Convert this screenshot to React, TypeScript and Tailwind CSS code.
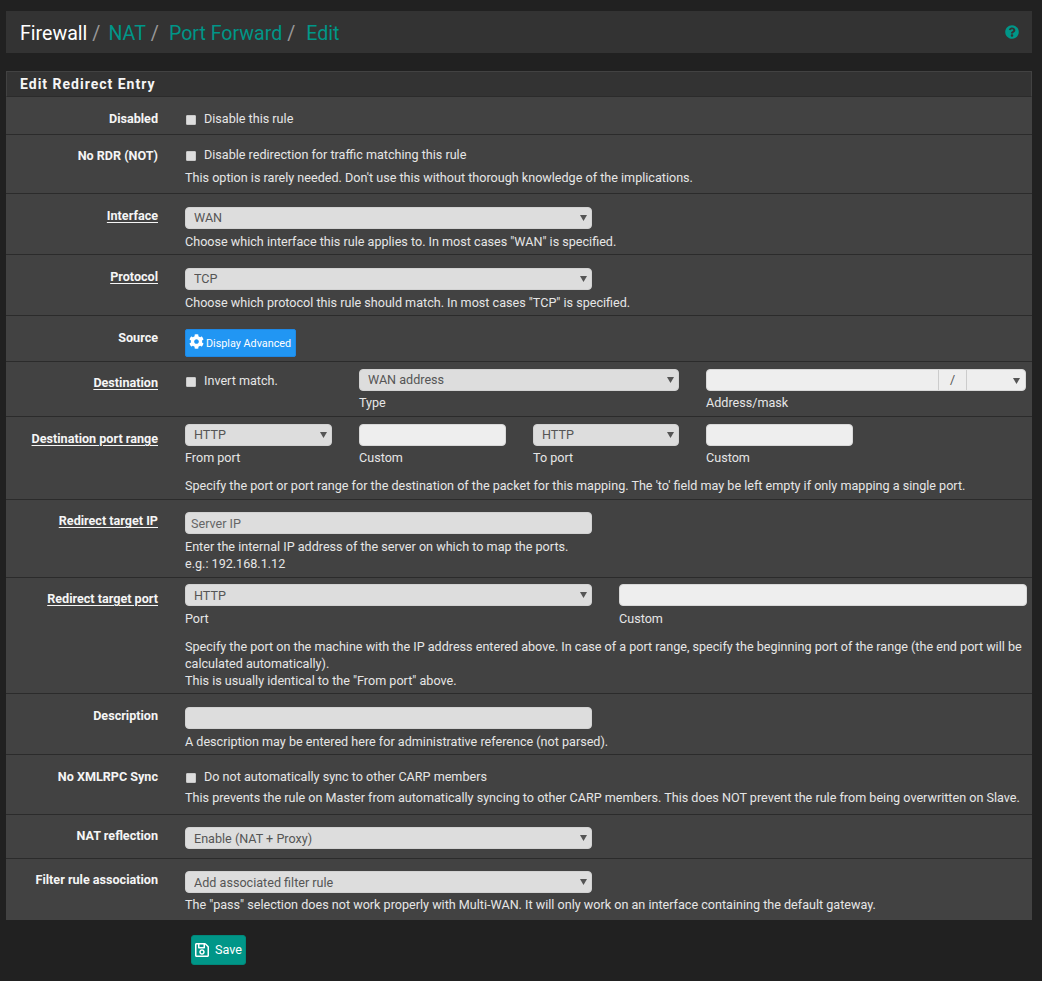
import { type ReactNode } from 'react'
import { FaCog, FaQuestionCircle, FaRegSave } from 'react-icons/fa'

function Row({ label, req, className, children }: { label: string; req?: boolean; className: string; children: ReactNode }) {
  return (
    <div className={`flex border-b border-[#2b2b2b] last:border-b-0 ${className}`}>
      <div className="w-[152px] shrink-0 text-right font-bold text-[12.6px] leading-[19px] text-[#f5f5f5]">
        <span className={req ? 'underline underline-offset-2' : ''}>{label}</span>
      </div>
      <div className="ml-[27px] w-[842px] shrink-0">{children}</div>
    </div>
  )
}

function Check({ label, className = '' }: { label: string; className?: string }) {
  return (
    <label className={`flex items-center h-[17px] ${className}`}>
      <input type="checkbox" className="appearance-none w-[10px] h-[10px] ml-[1px] rounded-[1px] bg-[#ddd] border border-[#c8c8c8]" />
      <span className="ml-[8px]">{label}</span>
    </label>
  )
}

function Select({ value, className = '', empty, low }: { value?: string; className?: string; empty?: boolean; low?: boolean }) {
  return (
    <div className={`relative ${className}`}>
      <select
        defaultValue={value}
        className={`appearance-none block w-full h-[22px] rounded-[4px] text-[12.6px] text-[#555] pl-[8px] ${low ? 'pt-[2px]' : ''} ${empty ? 'bg-transparent' : 'border border-[#d2d2d2] bg-[#ddd]'}`}
      >
        {value && <option>{value}</option>}
      </select>
      <svg viewBox="0 0 7 6" className="absolute right-[5px] top-[8px] w-[7px] h-[6px] pointer-events-none">
        <path d="M0 0h7L3.5 6z" fill="#555" />
      </svg>
    </div>
  )
}

function Field({ className = '' }: { className?: string }) {
  return <input type="text" className={`block h-[22px] rounded-[4px] border border-[#d8d8d8] bg-[#eee] ${className}`} />
}

function Help({ children, className = '' }: { children: ReactNode; className?: string }) {
  return <p className={`text-[#e6e6e6] leading-[17px] ${className}`}>{children}</p>
}

export default function App() {
  return (
    <div className="min-h-[981px] bg-[#212121] pt-[11px] px-[6px] text-[12.6px] text-[#e6e6e6]" style={{ fontFamily: 'Roboto, sans-serif' }}>
      <div className="w-[1026px] h-[42px] bg-[#333] flex items-center pt-[4px] pl-[14px] pr-[13px] text-[19.6px] text-[#009688]">
        <span className="text-white">Firewall</span>
        <span className="text-[#999] ml-[5px] mr-[8px]">/</span>
        <span>NAT</span>
        <span className="text-[#999] ml-[5px] mr-[10px]">/</span>
        <span>Port Forward</span>
        <span className="text-[#999] ml-[5px] mr-[11px]">/</span>
        <span>Edit</span>
        <FaQuestionCircle className="ml-auto -mt-[4px] text-[14px] text-[#009688]" />
      </div>

      <div className="w-[1026px] mt-[18px] bg-[#424242]">
        <div className="h-[26px] bg-[#333] border border-[#424242] border-b-[#2b2b2b] pl-[13px] flex items-center text-[14px] font-bold tracking-[1px] text-[#f5f5f5]">
          Edit Redirect Entry
        </div>

        <Row label="Disabled" className="h-[38px] pt-[12px]">
          <Check label="Disable this rule" className="mt-[2px]" />
        </Row>

        <Row label="No RDR (NOT)" className="h-[59px] pt-[11px]">
          <Check label="Disable redirection for traffic matching this rule" className="mt-[1px]" />
          <Help className="mt-[5px]">This option is rarely needed. Don't use this without thorough knowledge of the implications.</Help>
        </Row>

        <Row label="Interface" req className="h-[61px] pt-[12px]">
          <Select value="WAN" className="w-[407px] mt-[1px]" />
          <Help className="mt-[4px]">Choose which interface this rule applies to. In most cases "WAN" is specified.</Help>
        </Row>

        <Row label="Protocol" req className="h-[61px] pt-[12px]">
          <Select value="TCP" className="w-[407px] mt-[1px]" />
          <Help className="mt-[4px]">Choose which protocol this rule should match. In most cases "TCP" is specified.</Help>
        </Row>

        <Row label="Source" className="h-[46px] pt-[12px]">
          <button className="flex items-center h-[28px] w-[111px] mt-[1px] pl-[3px] rounded-[2px] bg-[#2196f3] border border-[#1e88e5] text-[10.8px] text-white">
            <FaCog className="text-[15px] mr-[2px] -mt-[3px]" />
            <span className="pt-[2px]">Display Advanced</span>
          </button>
        </Row>

        <Row label="Destination" req className="h-[55px] pt-[11px]">
          <div className="grid grid-cols-[147px_320px_320px] gap-x-[27px] -mt-[4px]">
            <div className="pt-[4px]">
              <Check label="Invert match." />
            </div>
            <div>
              <Select value="WAN address" className="w-full" />
              <div className="mt-[3px] leading-[17px]">Type</div>
            </div>
            <div>
              <div className="flex h-[22px] rounded-[4px] border border-[#d8d8d8] bg-[#eee] overflow-hidden">
                <input type="text" className="flex-1 min-w-0 bg-transparent" />
                <div className="w-[29px] border-x border-[#ccc] text-[#555] flex items-center justify-center">/</div>
                <Select empty className="w-[58px]" />
              </div>
              <div className="mt-[3px] leading-[17px]">Address/mask</div>
            </div>
          </div>
        </Row>

        <Row label="Destination port range" req className="h-[83px] pt-[12px]">
          <div className="grid grid-cols-[147px_147px_146px_147px] gap-x-[27px] -mt-[5px]">
            <div>
              <Select value="HTTP" className="w-full" />
              <div className="mt-[3px] leading-[17px]">From port</div>
            </div>
            <div>
              <Field className="w-full" />
              <div className="mt-[3px] leading-[17px]">Custom</div>
            </div>
            <div>
              <Select value="HTTP" className="w-full" />
              <div className="mt-[3px] leading-[17px]">To port</div>
            </div>
            <div>
              <Field className="w-full" />
              <div className="mt-[3px] leading-[17px]">Custom</div>
            </div>
          </div>
          <Help className="mt-[11px]">Specify the port or port range for the destination of the packet for this mapping. The 'to' field may be left empty if only mapping a single port.</Help>
        </Row>

        <Row label="Redirect target IP" req className="h-[78px] pt-[11px]">
          <input
            type="text"
            placeholder="Server IP"
            className="block w-[407px] h-[22px] mt-[1px] rounded-[4px] border border-[#d2d2d2] bg-[#ddd] px-[5px] text-[12.6px] text-[#555] placeholder:text-[#666]"
          />
          <Help className="mt-[4px]">Enter the internal IP address of the server on which to map the ports.</Help>
          <Help>e.g.: 192.168.1.12</Help>
        </Row>

        <Row label="Redirect target port" req className="h-[116px] pt-[11px]">
          <div className="grid grid-cols-[407px_408px] gap-x-[27px] -mt-[5px]">
            <div>
              <Select value="HTTP" low className="w-full" />
              <div className="mt-[4px] leading-[17px]">Port</div>
            </div>
            <div>
              <Field className="w-full" />
              <div className="mt-[4px] leading-[17px]">Custom</div>
            </div>
          </div>
          <Help className="mt-[11px]">
            Specify the port on the machine with the IP address entered above. In case of a port range, specify the beginning port of the range (the end port will be calculated automatically).
            <br />
            This is usually identical to the "From port" above.
          </Help>
        </Row>

        <Row label="Description" className="h-[61px] pt-[12px]">
          <input type="text" className="block w-[407px] h-[22px] mt-[1px] rounded-[4px] border border-[#d2d2d2] bg-[#ddd]" />
          <Help className="mt-[4px]">A description may be entered here for administrative reference (not parsed).</Help>
        </Row>

        <Row label="No XMLRPC Sync" className="h-[60px] pt-[12px]">
          <Check label="Do not automatically sync to other CARP members" className="mt-[2px]" />
          <Help className="mt-[3px]">This prevents the rule on Master from automatically syncing to other CARP members. This does NOT prevent the rule from being overwritten on Slave.</Help>
        </Row>

        <Row label="NAT reflection" className="h-[44px] pt-[11px]">
          <Select value="Enable (NAT + Proxy)" low className="w-[407px] mt-[1px]" />
        </Row>

        <Row label="Filter rule association" className="h-[61px] pt-[11px]">
          <Select value="Add associated filter rule" low className="w-[407px] mt-[1px]" />
          <Help className="mt-[3px]">The "pass" selection does not work properly with Multi-WAN. It will only work on an interface containing the default gateway.</Help>
        </Row>
      </div>

      <button className="flex items-center ml-[185px] mt-[15px] h-[30px] w-[55px] pl-[2px] rounded-[3px] bg-[#009688] border border-[#00897b] text-[12.6px] text-white">
        <FaRegSave className="text-[16px] mr-[5px]" />
        Save
      </button>
    </div>
  )
}
